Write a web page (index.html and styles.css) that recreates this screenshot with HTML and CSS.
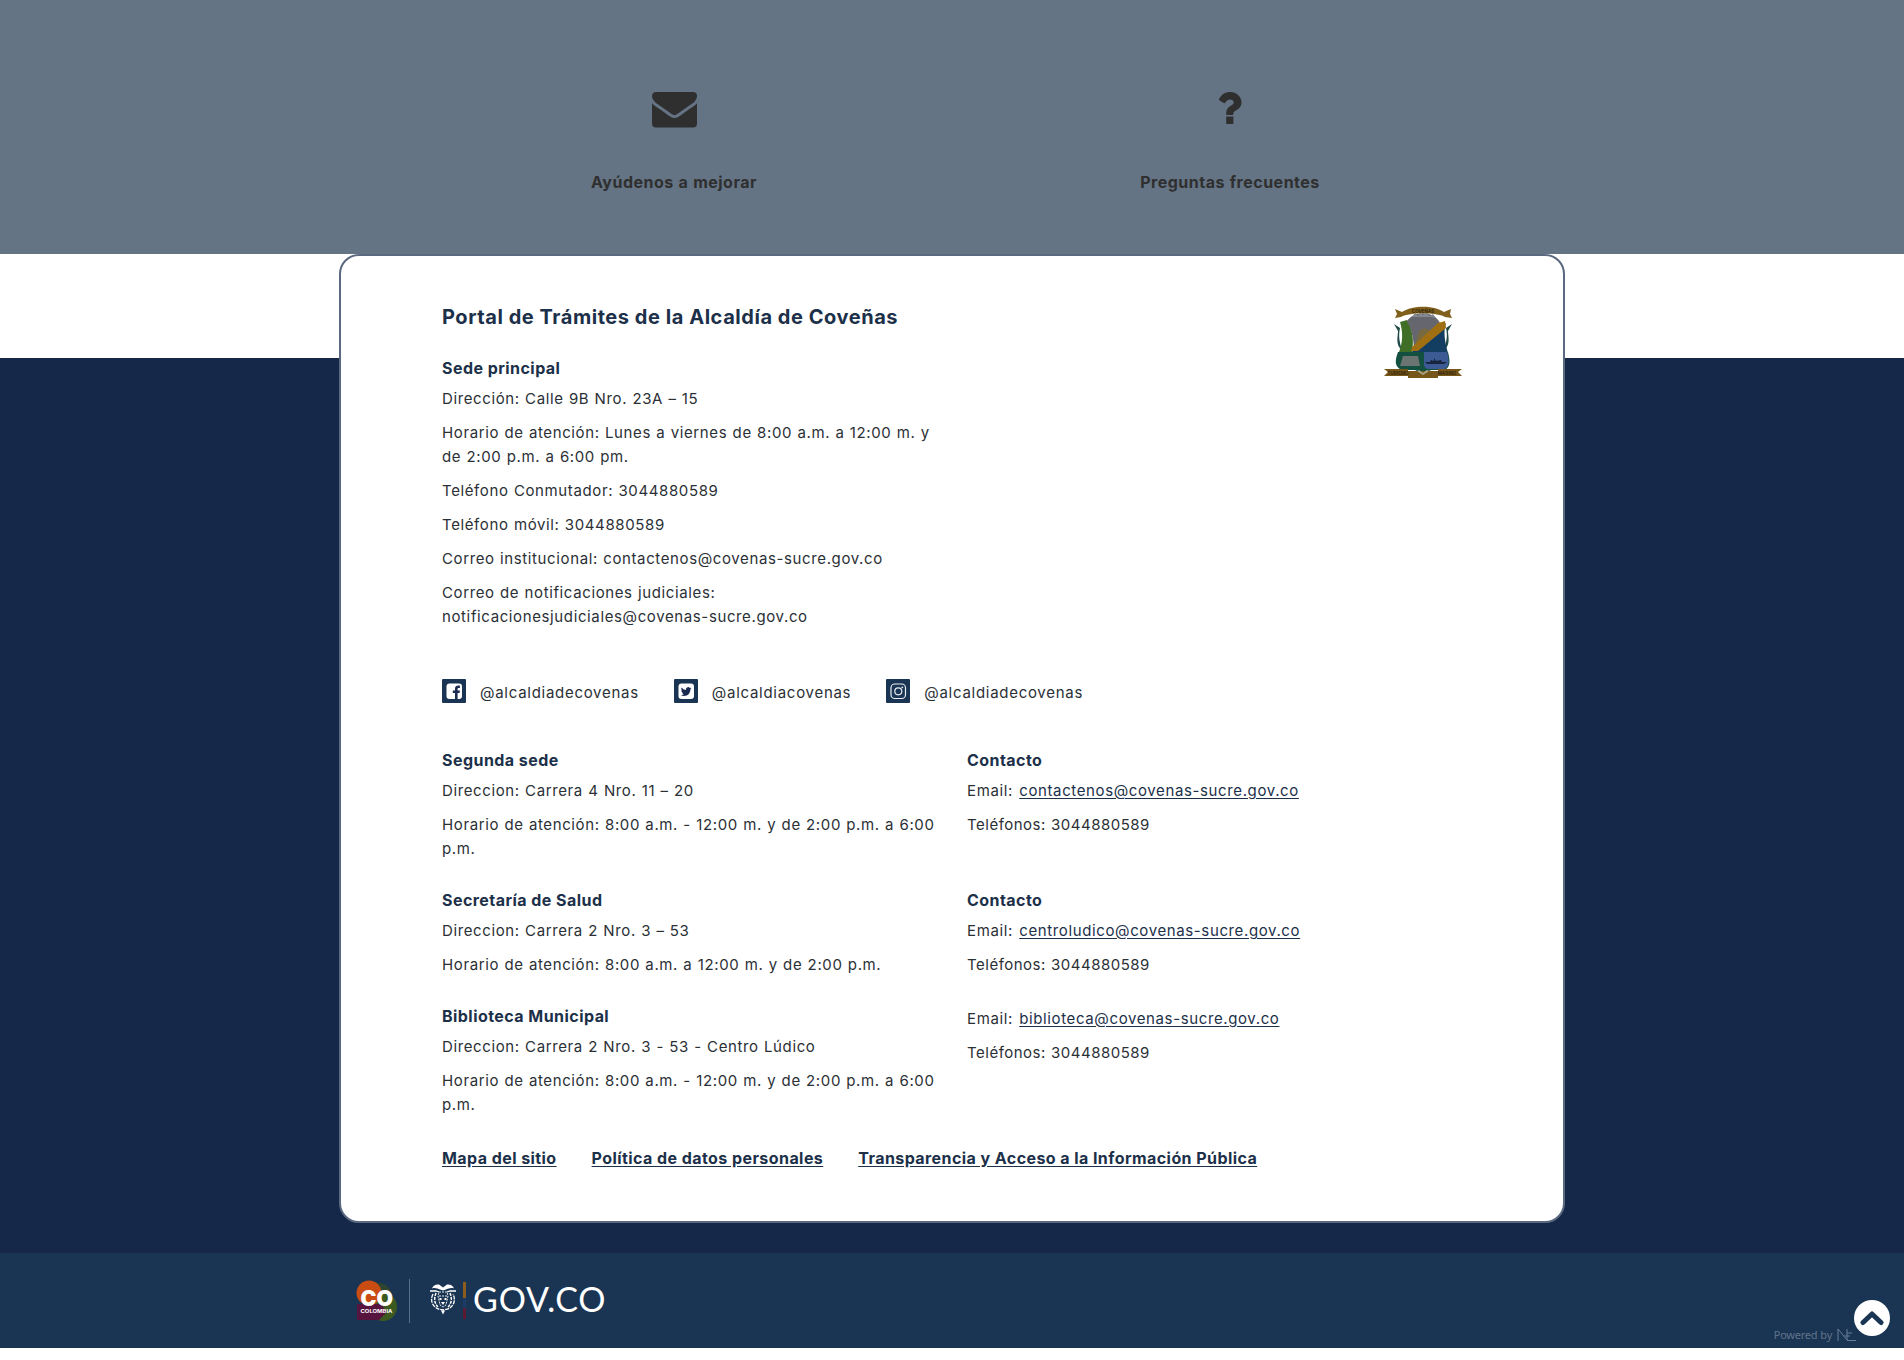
FILE: index.html
```html
<!DOCTYPE html>
<html lang="es">
<head>
<meta charset="utf-8">
<title>Portal de Trámites de la Alcaldía de Coveñas</title>
<link rel="stylesheet" href="styles.css">
</head>
<body>
<section class="help">
  <div class="help-item">
    <svg class="help-icon" width="45" height="36" viewBox="0 0 45 36"><path d="M0 11.300c.8.9 1.700 1.700 2.700 2.400 4.200 2.800 8.400 5.700 12.500 8.700 2.100 1.600 4.700 3.500 7.300 3.500s5.200-1.900 7.300-3.500c4.100-3 8.300-5.800 12.500-8.700 1-.7 1.900-1.500 2.700-2.400V31.400a4 4 0 0 1-4 4H4a4 4 0 0 1-4-4z"/><path d="M4 0H41a4 4 0 0 1 4 4c0 3.100-2.300 5.900-4.700 7.600l-12.200 8.500c-1.700 1.200-3.700 3.200-5.600 3.200s-3.900-2-5.600-3.200L4.700 11.600C2.500 10.100 0 6.600 0 4.300 0 1.900 1.300 0 4 0z"/></svg>
    <a class="help-label">Ayúdenos a mejorar</a>
  </div>
  <div class="help-item">
    <svg class="help-icon" width="24" height="36" viewBox="0 0 24 36"><path d="M8.200 24.600h7.200v6.700a.8.8 0 0 1-.8.8H9a.8.8 0 0 1-.8-.8zM8.200 22.200v-1.300c0-3.800 2.200-5.800 4.500-7.200 1.900-1.100 3-1.800 3-3.300 0-1.900-1.700-3-3.500-3-2.600 0-3.900 1.600-5.300 3.500a.8.8 0 0 1-1.100.2L1.200 8.200a.8.8 0 0 1-.2-1C3.500 2.500 7.100 0 12.500 0 18 0 23.500 4.400 23.500 10.200c0 4-2.100 6.200-4.800 7.800-1.900 1.100-3.300 2-3.300 3.300v.9a.8.8 0 0 1-.8.8H9a.8.8 0 0 1-.8-.8z"/></svg>
    <a class="help-label">Preguntas frecuentes</a>
  </div>
</section>

<footer class="footer">
  <div class="card">
    <div class="card-head">
      <div class="main-office">
        <h2 class="title">Portal de Trámites de la Alcaldía de Coveñas</h2>
        <h3 class="heading">Sede principal</h3>
        <p>Dirección: Calle 9B Nro. 23A – 15</p>
        <p>Horario de atención: Lunes a viernes de 8:00 a.m. a 12:00 m. y<br>de 2:00 p.m. a 6:00 pm.</p>
        <p>Teléfono Conmutador: 3044880589</p>
        <p>Teléfono móvil: 3044880589</p>
        <p>Correo institucional: contactenos@covenas-sucre.gov.co</p>
        <p>Correo de notificaciones judiciales:<br>notificacionesjudiciales@covenas-sucre.gov.co</p>
      </div>
      <svg class="crest" width="78" height="74" viewBox="0 0 78 74">
        <path d="M10 18l6 4c-2 9 0 15 2 22-7-5-4-14-4-19zM68 18l-6 4c2 9 0 15-2 22 7-5 4-14 4-19z" fill="#1f4a46"/>
        <path d="M16 16l7-2c6 10 7 21 5 32H15c4-10 4-20 1-30z" fill="#3f6f26"/>
        <path d="M23 15c7-10 26-11 33 2L30 46c0-12-2-22-7-31z" fill="#66666e"/>
        <path d="M34 28c2-6 8-7 12-3l-3 7-12 7z" fill="#776a43"/>
        <path d="M62 17c-3 9-1 19 2 30H28l1-5z" fill="#143d62"/>
        <path d="M54 17l7-2 1 7-28 23h-7l1-4z" fill="#a06f12"/>
        <path d="M14 46h50c2 8 3 14-3 18H47l-8 4-8-4H18c-8-3-7-10-4-18z" fill="#14503f"/>
        <path d="M19 50h15l2 10H16z" fill="#6b7470"/>
        <path d="M40 46h23c2 7 3 13-2 17H45c-3 0-5-2-5-4z" fill="#3c5a94"/>
        <path d="M41 56h5l1-2 3 1v-3l2 3 5-1 1 2h5l-3 2H43z" fill="#17243e"/>
        <path d="M28 11l3-4 3 3 2-4 3 3 4-3 2 4 4-2 3 4-5-1H33z" fill="#858890"/>
        <path d="M11 3l7 3C29-1 49-1 60 6l7-3-1 5 2 4-7-1c-9-5-35-5-44 0l-6 1 2-4z" fill="#80601c"/>
        <path d="M0 63h24v2h30v-2h24l-4 3 4 4H54v2H24v-2H0l4-4z" fill="#775719"/>
        <path d="M35 64l4 3 4-3 2 1-6 4-6-4z" fill="#a9a68a"/>
        <text class="crest-text" x="39" y="6.500" text-anchor="middle">COVEÑAS</text>
        <text class="crest-text" x="14" y="68.500" text-anchor="middle">TURISMO</text>
        <text class="crest-text" x="63" y="68.500" text-anchor="middle">MARINO</text>
      </svg>
    </div>

    <div class="social">
      <a class="social-link">
        <svg width="24" height="24" viewBox="0 0 24 24"><rect width="24" height="24" rx="1" fill="#1a3553"/><rect x="4.500" y="4.500" width="15.500" height="15.500" rx="3" fill="#fff"/><path d="M13 20v-6h-2.200v-2.400H13V9.800c0-2.100 1.300-3.200 3.200-3.200h1.700v2.300h-1.100c-1 0-1.200.5-1.200 1.100v1.600h2.300l-.3 2.400h-2v6z" fill="#1a2a50"/></svg>
        <span>@alcaldiadecovenas</span>
      </a>
      <a class="social-link">
        <svg width="24" height="24" viewBox="0 0 24 24"><rect width="24" height="24" rx="1" fill="#1a3553"/><rect x="4.500" y="4.500" width="15.500" height="15.500" rx="3" fill="#fff"/><path d="M17.500 9.200l-1.200.4.900-1.200-1.400.5a2.200 2.200 0 0 0-3.800 2A6.200 6.200 0 0 1 7.500 8.600a2.200 2.200 0 0 0 .7 2.900l-1-.2c0 1.100.8 1.900 1.800 2.200h-1c.3.900 1.100 1.500 2 1.500A4.500 4.500 0 0 1 6.800 16c4.600 2.600 9.600-.4 9.600-5.500z" fill="#1a2a50"/></svg>
        <span>@alcaldiacovenas</span>
      </a>
      <a class="social-link">
        <svg width="24" height="24" viewBox="0 0 24 24"><rect width="24" height="24" rx="1" fill="#1a3553"/><g fill="none" stroke="#e9eef3" stroke-width="1.200"><rect x="5" y="5" width="14.500" height="14.500" rx="3.800"/><circle cx="12.300" cy="12.300" r="3.500"/></g><circle cx="16.300" cy="8.300" r=".9" fill="#e9eef3"/></svg>
        <span>@alcaldiadecovenas</span>
      </a>
    </div>

    <div class="offices">
      <div class="office">
        <div>
          <h3 class="heading">Segunda sede</h3>
          <p>Direccion: Carrera 4 Nro. 11 – 20</p>
          <p>Horario de atención: 8:00 a.m. - 12:00 m. y de 2:00 p.m. a 6:00<br>p.m.</p>
        </div>
        <div>
          <h3 class="heading">Contacto</h3>
          <p>Email: <a class="mail">contactenos@covenas-sucre.gov.co</a></p>
          <p class="phone">Teléfonos: 3044880589</p>
        </div>
      </div>
      <div class="office">
        <div>
          <h3 class="heading">Secretaría de Salud</h3>
          <p>Direccion: Carrera 2 Nro. 3 – 53</p>
          <p>Horario de atención: 8:00 a.m. a 12:00 m. y de 2:00 p.m.</p>
        </div>
        <div>
          <h3 class="heading">Contacto</h3>
          <p>Email: <a class="mail">centroludico@covenas-sucre.gov.co</a></p>
          <p class="phone">Teléfonos: 3044880589</p>
        </div>
      </div>
      <div class="office">
        <div>
          <h3 class="heading">Biblioteca Municipal</h3>
          <p>Direccion: Carrera 2 Nro. 3 - 53 - Centro Lúdico</p>
          <p>Horario de atención: 8:00 a.m. - 12:00 m. y de 2:00 p.m. a 6:00<br>p.m.</p>
        </div>
        <div class="contact-plain">
          <p>Email: <a class="mail">biblioteca@covenas-sucre.gov.co</a></p>
          <p class="phone">Teléfonos: 3044880589</p>
        </div>
      </div>
    </div>

    <nav class="links">
      <a>Mapa del sitio</a>
      <a>Política de datos personales</a>
      <a>Transparencia y Acceso a la Información Pública</a>
    </nav>
  </div>
</footer>

<div class="govbar">
  <svg class="co-logo" width="41" height="41" viewBox="0 0 41 41">
    <circle cx="23" cy="15" r="12" fill="#30452f"/>
    <circle cx="27" cy="27" r="14" fill="#3c5a20"/>
    <circle cx="13" cy="13" r="12.500" fill="#c94d12"/>
    <path d="M1 24h24l6 8-8 8H1z" fill="#57143f"/>
    <text class="co-name" x="4.500" y="25.500" textLength="32.500" lengthAdjust="spacingAndGlyphs">CO</text>
    <text class="co-country" x="4.500" y="32.700" textLength="32" lengthAdjust="spacingAndGlyphs">COLOMBIA</text>
  </svg>
  <span class="separator"></span>
  <svg class="escudo" width="28" height="32" viewBox="0 0 28 32" fill="none" stroke="#fff">
    <path d="M3 5.500c1-3 4-4.500 7-4l4 3 4-3c3-.5 6 1 7 4-3-1-6 .2-8 1l-3 1-3-1c-2-.8-5-2-8-1z" fill="#fff" stroke="none"/>
    <path d="M1 8h6l3 1M27 8h-6l-3 1" stroke-width="1.300"/>
    <path d="M7 10c-2 5-2 10 2 14M21 10c2 5 2 10-2 14" stroke-width="1.500" stroke-dasharray="3 1"/>
    <path d="M4 11c-3 6-1 12 5 15l5 1 5-1c6-3 8-9 5-15" stroke-width="1.300" stroke-dasharray="4 1"/>
    <path d="M10 9l8 0 1 4-2 9-3 2-3-2-2-9zM10 13h8" stroke-width=".9" stroke-dasharray="2 1"/>
    <path d="M10.500 15h2v2h-2zM15.500 15h2v2h-2zM12 19h4l-2 3zM12 27.500h4l-2 4z" fill="#fff" stroke="none"/>
  </svg>
  <span class="flag"></span>
  <span class="gov">GOV.CO</span>
  <div class="powered">
    <span>Powered by</span>
    <svg width="19" height="14" viewBox="0 0 19 14" fill="none" stroke="#687d99" stroke-width="1"><path d="M1 13V1l9 11V1M10 5h5M7 8h6M10 12.500h9"/></svg>
  </div>
  <a class="to-top"><svg width="24" height="16" viewBox="0 0 24 16"><path d="M3 12.500L12 4l9 8.500" fill="none" stroke="#1a3553" stroke-width="5" stroke-linecap="round" stroke-linejoin="round"/></svg></a>
</div>
</body>
</html>
```
FILE: styles.css
```css
* { box-sizing: border-box; }

body {
  margin: 0;
  background: #fff;
  color: #2b3036;
  font: 15px/24px Inter, "Open Sans", sans-serif;
  letter-spacing: 0.62px;
  word-spacing: 0.5px;
}

h2, h3, p { margin: 0; }

/* Help strip */
.help {
  height: 254px;
  padding: 92px 396px 0;
  display: grid;
  grid-template-columns: 1fr 1fr;
  background: #647484;
}
.help-item {
  display: flex;
  flex-direction: column;
  align-items: center;
  gap: 42px;
}
.help-icon { fill: #2f2f2f; }
.help-label {
  font-size: 16px;
  font-weight: 700;
  letter-spacing: 0.5px;
  color: #2f2f2f;
}

/* Contact card */
.footer {
  height: 999px;
  background: linear-gradient(#fff 104px, #152849 104px);
}
.card {
  width: 1226px;
  height: 969px;
  margin: 0 auto;
  padding: 49px 101px 0;
  border: 2px solid #5b6980;
  border-radius: 20px;
  background: #fff;
}
.card-head {
  display: flex;
  justify-content: space-between;
}
.main-office, .office { white-space: nowrap; }
.title {
  margin-bottom: 27px;
  font-size: 20px;
  line-height: 24px;
  letter-spacing: 0.55px;
  word-spacing: 0;
  color: #1c3049;
}
.heading {
  margin-bottom: 7px;
  font-size: 16px;
  line-height: 24px;
  letter-spacing: 0.45px;
  word-spacing: 0;
  color: #1c3049;
}
p + p { margin-top: 10px; }
.crest { margin-top: 1px; }
.crest-text {
  font: 700 4.500px Inter, sans-serif;
  letter-spacing: 0;
  fill: #37290f;
}

.social {
  display: flex;
  gap: 35px;
  margin-top: 50px;
}
.social-link {
  display: flex;
  gap: 14px;
  height: 24px;
  letter-spacing: 0.72px;
}
.social-link span { padding-top: 2px; }

.offices {
  display: flex;
  flex-direction: column;
  gap: 27px;
  margin-top: 45px;
}
.office {
  display: grid;
  grid-template-columns: 525px 1fr;
}
.contact-plain { padding-top: 3px; }
.mail {
  margin-left: 1px;
  color: #1c3049;
  text-decoration: underline;
  text-underline-offset: 2px;
}
.phone { letter-spacing: 0.5px; }

.links {
  display: flex;
  gap: 35px;
  margin-top: 29px;
  font-size: 16px;
  font-weight: 700;
  letter-spacing: 0.43px;
  word-spacing: 0;
  color: #1c3049;
}
.links a {
  text-decoration: underline;
  text-underline-offset: 2px;
}

/* Government bar */
.govbar {
  position: relative;
  display: flex;
  align-items: center;
  height: 95px;
  padding-left: 356px;
  background: #1a3553;
}
.co-name {
  font: 900 22px Inter, sans-serif;
  fill: #fff;
  letter-spacing: 0;
}
.co-country {
  font: 700 5px Inter, sans-serif;
  fill: #fff;
  letter-spacing: 0;
}
.separator {
  width: 1px;
  height: 44px;
  margin: 0 19px 0 12px;
  background: #587089;
}
.escudo { margin-top: -3px; }
.flag {
  width: 3px;
  height: 37px;
  margin: 0 7px 0 6px;
  background: linear-gradient(#8b5c1c 16px, #1c3a64 16px 26px, #5e1a2f 26px);
}
.gov {
  margin-top: -3px;
  font: 400 34px/40px Lato, sans-serif;
  letter-spacing: 0.8px;
  color: #fff;
}
.powered {
  display: flex;
  align-items: center;
  gap: 5px;
  margin: 68px 48px 0 auto;
  height: 14px;
  font: 11px/14px "Noto Sans", sans-serif;
  letter-spacing: -0.25px;
  color: #61728a;
}
.to-top {
  position: absolute;
  right: 14px;
  bottom: 12px;
  width: 36px;
  height: 36px;
  display: flex;
  align-items: center;
  justify-content: center;
  border-radius: 50%;
  background: #fff;
}
```
